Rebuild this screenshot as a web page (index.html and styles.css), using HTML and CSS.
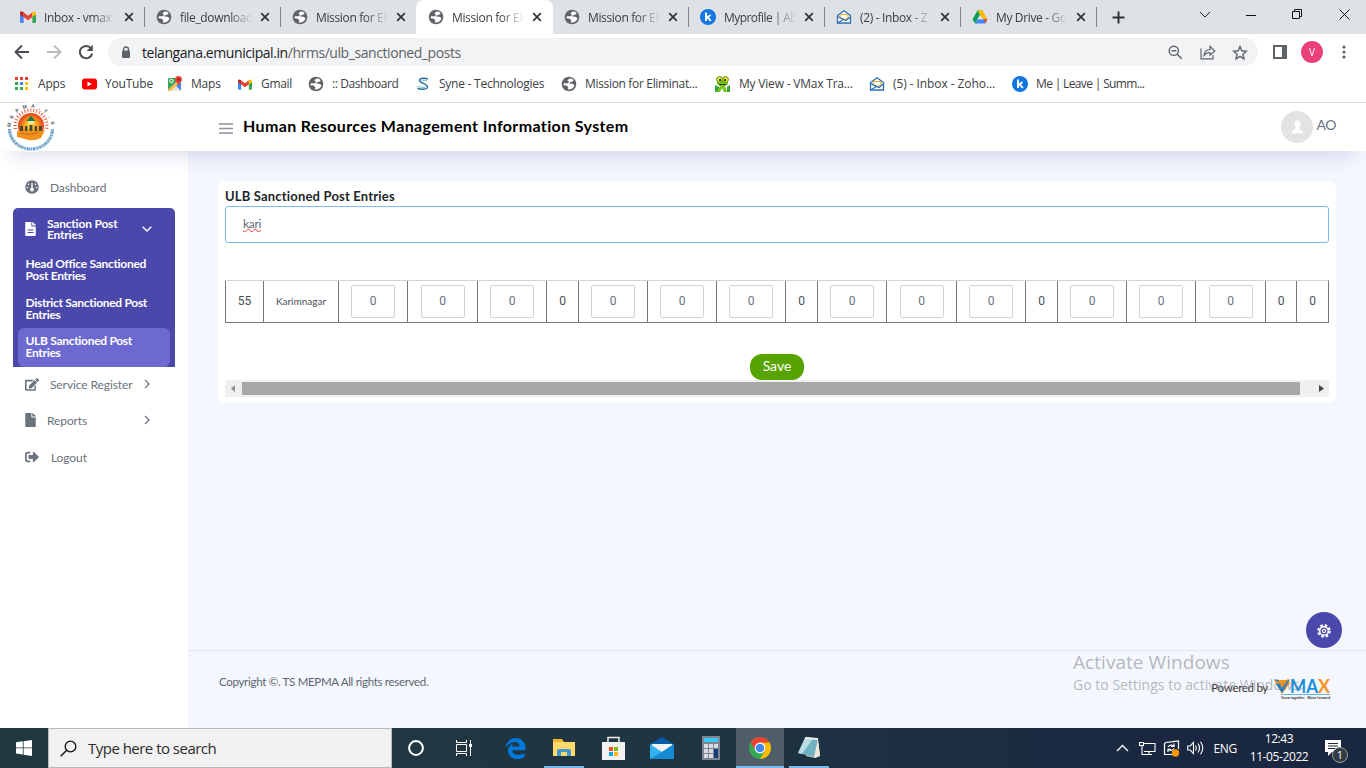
FILE: index.html
```html
<!DOCTYPE html>
<html lang="en">
<head>
<meta charset="utf-8">
<title>ULB Sanctioned Post Entries</title>
<link rel="stylesheet" href="styles.css">
</head>
<body>
<svg class="defs" width="0" height="0">
  <symbol id="globe" viewBox="0 0 16 16"><circle cx="8" cy="8" r="7.3" fill="#5f6368"/><path d="M8.500 2.500L6.200 4.600 8 5.600 7.300 7.200H3L2.300 9.300l3.200.2 1.800 1.700-.6 2.200c3.500.6 6.300-1.700 6.800-4.400l-2.300-1.300-3-.2 1.200-1.500 2.600-.4.600-1.600-2-1.500z" fill="#fff"/></symbol>
  <symbol id="gmail" viewBox="0 0 16 12"><path d="M0 1.800V10.500Q0 12 1.300 12H3.600V4.500z" fill="#4285f4"/><path d="M16 1.800V10.500Q16 12 14.700 12H12.400V4.500z" fill="#34a853"/><path d="M3.600 1.200V6L8 9.200 12.400 6V1.200L8 4.700z" fill="#ea4335"/><path d="M0 2Q.2-.8 3.600 1.200V6L0 3.400z" fill="#c5221f"/><path d="M16 2Q15.800-.8 12.400 1.200V6L16 3.400z" fill="#fbbc04"/></symbol>
  <symbol id="keka" viewBox="0 0 16 16"><circle cx="8" cy="8" r="8" fill="#1277e1"/><path d="M6 3.500V12M10.500 6L6.500 9M7.800 8.300L10.800 12" stroke="#fff" stroke-width="1.900" fill="none"/></symbol>
  <symbol id="zoho" viewBox="0 0 16 16"><path d="M1.500 6.500L8 1.700l6.500 4.800V14h-13z" fill="#fff" stroke="#2a6fb8" stroke-width="1.300"/><path d="M4 9V6.500Q4 5.500 5 5.500h6q1 0 1 1V9L9 10.500z" fill="#fff" stroke="#e8aa2e" stroke-width="1.200"/><path d="M1.500 7.500L10 11.500 14.500 8M1.500 14L7.500 10.500" stroke="#2a6fb8" fill="none" stroke-width="1.200"/></symbol>
  <symbol id="close" viewBox="0 0 10 10"><path d="M1.200 1.200l7.600 7.600M8.800 1.200L1.200 8.800" stroke="#303336" stroke-width="1.700"/></symbol>
  <symbol id="chev" viewBox="0 0 6 10"><path d="M1 1l4 4-4 4" stroke="currentColor" fill="none" stroke-width="1.200"/></symbol>
  <symbol id="file" viewBox="0 0 384 512"><path fill="currentColor" d="M224 136V0H24C10.700 0 0 10.700 0 24v464c0 13.300 10.700 24 24 24h336c13.300 0 24-10.700 24-24V160H248c-13.200 0-24-10.800-24-24zm160-14.100v6.100H256V0h6.100c6.400 0 12.500 2.500 17 7l97.900 98c4.500 4.500 7 10.600 7 16.900z"/></symbol>
</svg>

<div class="browser">
  <div class="tabs">
    <div class="tab"><svg class="fav"><use href="#gmail" y="2" height="12"/></svg><span class="tt">Inbox - vmax.</span><svg class="cx"><use href="#close"/></svg></div>
    <div class="tab"><svg class="fav"><use href="#globe"/></svg><span class="tt">file_download</span><svg class="cx"><use href="#close"/></svg></div>
    <div class="tab"><svg class="fav"><use href="#globe"/></svg><span class="tt">Mission for Eli</span><svg class="cx"><use href="#close"/></svg></div>
    <div class="tab active"><svg class="fav"><use href="#globe"/></svg><span class="tt">Mission for Eli</span><svg class="cx"><use href="#close"/></svg></div>
    <div class="tab"><svg class="fav"><use href="#globe"/></svg><span class="tt">Mission for Eli</span><svg class="cx"><use href="#close"/></svg></div>
    <div class="tab sep"><svg class="fav"><use href="#keka"/></svg><span class="tt tight">Myprofile | Ab</span><svg class="cx"><use href="#close"/></svg></div>
    <div class="tab sep"><svg class="fav"><use href="#zoho"/></svg><span class="tt">(2) - Inbox - Z</span><svg class="cx"><use href="#close"/></svg></div>
    <div class="tab sep"><svg class="fav" viewBox="0 0 16 16"><path d="M5.500 1.500h5L8 6 3 14.500.500 10.200z" fill="#0f9d58"/><path d="M5.500 1.500h5L15.500 10.200h-5z" fill="#fbbc04"/><path d="M5.500 10.200h10L13 14.500H3z" fill="#4285f4"/><path d="M12 10.200h3.500L13 14.500z" fill="#ea4335"/><path d="M8 6l2.500 4.200h-5z" fill="#dee1e6"/></svg><span class="tt">My Drive - Go</span><svg class="cx"><use href="#close"/></svg></div>
    <div class="newtab"><svg width="13" height="13"><path d="M6.500 .500v12M.500 6.500h12" stroke="#303336" stroke-width="2"/></svg></div>
    <div class="wincontrols">
      <svg width="12" height="7"><path d="M1 1l5 5 5-5" stroke="#222" fill="none"/></svg>
      <svg width="10" height="6"><path d="M0 3.500h10" stroke="#111"/></svg>
      <svg width="11" height="11"><path d="M.500 2.500h7v7h-7zM2.500 2.500v-2h7v7h-2" stroke="#111" fill="none"/></svg>
      <svg width="11" height="11"><path d="M.500 .500l10 10M10.500 .500l-10 10" stroke="#111" fill="none"/></svg>
    </div>
  </div>
  <div class="toolbar">
    <svg class="nav" width="16" height="16"><path d="M15 8H2M8 1.500L1.500 8 8 14.500" stroke="#4a4d51" stroke-width="1.900" fill="none"/></svg>
    <svg class="nav" width="16" height="16"><path d="M1 8h13M8 1.500L14.500 8 8 14.500" stroke="#b9bbbe" stroke-width="1.900" fill="none"/></svg>
    <svg class="nav" width="16" height="16"><path d="M13 4.200A6.200 6.200 0 1 0 14.200 9.500" stroke="#4a4d51" stroke-width="2" fill="none"/><path d="M14.800 .800v6.200H8.600z" fill="#4a4d51"/></svg>
    <div class="omni">
      <svg width="10" height="13"><path d="M2.500 5V3.500a2.500 2.500 0 0 1 5 0V5" stroke="#5f6368" stroke-width="1.400" fill="none"/><rect x="1" y="4.500" width="8" height="7.500" rx="1" fill="#5f6368"/></svg>
      <span class="url">telangana.emunicipal.in<i>/hrms/ulb_sanctioned_posts</i></span>
      <svg width="15" height="15"><circle cx="5.800" cy="5.800" r="4.600" stroke="#5f6368" stroke-width="1.400" fill="none"/><path d="M9.200 9.200l4.600 4.600M3.500 5.800h4.600" stroke="#5f6368" stroke-width="1.500"/></svg>
      <svg class="share" width="16" height="15"><path d="M1 3.500v10.300h12V10" stroke="#5f6368" stroke-width="1.200" fill="none"/><path d="M4 10.500C4.500 6.500 6.800 4.600 10 4.500V1.500L14.800 6 10 10.200V7.500C7.500 7.500 5.700 8.300 4 10.500z" stroke="#5f6368" stroke-width="1.200" fill="none"/></svg>
      <svg width="16" height="15"><path d="M8 1.500l1.800 4.300 4.700.4-3.600 3.100 1.100 4.600L8 11.400l-4 2.500 1.100-4.600-3.600-3.100 4.700-.4z" stroke="#5f6368" stroke-width="1.400" fill="none"/></svg>
    </div>
    <svg class="side" width="14" height="14"><path d="M1 1h12v12H1z" fill="none" stroke="#5f6368" stroke-width="2"/><path d="M9 0h5v14H9z" fill="#5f6368"/></svg>
    <div class="profile">V</div>
    <svg width="4" height="14"><g fill="#5f6368"><circle cx="2" cy="2" r="1.600"/><circle cx="2" cy="7" r="1.600"/><circle cx="2" cy="12" r="1.600"/></g></svg>
  </div>
  <div class="bookmarks">
    <div class="bm b1"><svg width="14" height="14"><path d="M0 0h3v3H0zM5 0h3v3H5zM10 0h3v3h-3z" fill="#ea4335"/><path d="M0 5h3v3H0z" fill="#34a853"/><path d="M5 5h3v3H5z" fill="#4285f4"/><path d="M10 5h3v3h-3z" fill="#fbbc04"/><path d="M0 10h3v3H0zM5 10h3v3H5z" fill="#34a853"/><path d="M10 10h3v3h-3z" fill="#fbbc04"/></svg><span>Apps</span></div>
    <div class="bm b2"><svg width="16" height="16"><rect x="1" y="2.500" width="15" height="11" rx="3" fill="#f00"/><path d="M6.500 5.500v5l4.500-2.500z" fill="#fff"/></svg><span>YouTube</span></div>
    <div class="bm b3"><svg width="16" height="16"><rect x="1" y="2" width="13" height="13" rx="1.500" fill="#34a853"/><path d="M1 13L12 3l2 2v8.500L10 15H3z" fill="#4285f4"/><path d="M2 15l6.500-6L14 15z" fill="#e6e6e6"/><path d="M1 13.500L12.500 3l1.500 2L4 15H2z" fill="#f9c440"/><circle cx="4.500" cy="5" r="1.700" fill="none" stroke="#fff"/><path d="M11.500 0a3.500 3.500 0 0 1 3.500 3.500c0 2.500-3 3.500-3.500 6.500-.5-3-3.500-4-3.500-6.500A3.500 3.500 0 0 1 11.500 0z" fill="#e84335"/><circle cx="11.500" cy="3.500" r="1.200" fill="#841c1c"/></svg><span>Maps</span></div>
    <div class="bm b4"><svg width="16" height="16"><use href="#gmail" x="1" y="3" width="14" height="11"/></svg><span>Gmail</span></div>
    <div class="bm b5"><svg width="16" height="16"><use href="#globe"/></svg><span>:: Dashboard</span></div>
    <div class="bm b6"><svg width="16" height="16"><path d="M13 3C9.500 1.500 4.500 2 4.500 4.500S13 8 12.500 11 6 13.500 2.500 12.500" stroke="#2c6f9f" fill="none" stroke-width="1.500"/><path d="M12 5C8 3.500 6 4 6.500 5.200M2.500 10.500c4 1 8 1.200 8-.5" stroke="#58b8c4" fill="none"/></svg><span>Syne - Technologies</span></div>
    <div class="bm b7"><svg width="16" height="16"><use href="#globe"/></svg><span>Mission for Eliminat...</span></div>
    <div class="bm b8"><svg width="17" height="16"><path d="M1 9l4 2v5H1zM16 9l-3 2v5h3z" fill="#39a33c"/><path d="M3 3h11v5l-3 2 2 6h-3l-2-4-2 4H3l3-6-3-2z" fill="#76c51d"/><circle cx="5.500" cy="3.500" r="2.900" fill="#f7e32a" stroke="#4a941a"/><circle cx="11.500" cy="3.500" r="2.900" fill="#f7e32a" stroke="#4a941a"/><path d="M5 3h2v2H5zM10 3h2v2h-2zM5 8h7v1H5z" fill="#263a10"/></svg><span>My View - VMax Tra...</span></div>
    <div class="bm b9"><svg width="16" height="16"><use href="#zoho"/></svg><span>(5) - Inbox - Zoho...</span></div>
    <div class="bm b10"><svg width="16" height="16"><use href="#keka"/></svg><span>Me | Leave | Summ...</span></div>
  </div>
</div>

<header class="apphead">
  <svg class="logo" width="50" height="50" viewBox="0 0 50 50">
    <defs><radialGradient id="sun"><stop offset="0" stop-color="#ffe94e"/><stop offset=".45" stop-color="#ffad1f"/><stop offset="1" stop-color="#e33d16"/></radialGradient><path id="arcTop" d="M4.500 26A20 20 0 0 1 45.500 26"/></defs>
    <circle cx="25" cy="25" r="25" fill="#fff"/>
    <path d="M9.500 27A15.800 15.800 0 1 1 40.500 27" fill="none" stroke="#ed5b37" stroke-width="3.500" stroke-dasharray="1 2"/>
    <circle cx="25" cy="24" r="13" fill="url(#sun)"/>
    <path d="M25 14l4.500 5h-9z" fill="#167a43"/><path d="M22 19h6v3h-6z" fill="#f5e5a0"/><path d="M14 24h3v5h-3zM19 24h2.500v5H19zM23.500 23h3v6h-3zM28.500 24h2.500v5h-2.500zM33 24h3v5h-3z" fill="#4b4b35"/>
    <path d="M11 29h24l4-1-4 8q-8 4-16 1l-8-2z" fill="#f2921d"/><path d="M15 31q10 3 18-1" stroke="#c96913" fill="none"/>
    <text class="arc"><textPath href="#arcTop" startOffset="1" textLength="60">M E P M A , T . S</textPath></text>
    <path d="M3.500 27A21.500 20 0 0 0 46.500 27" fill="none" stroke="#6fa3c9" stroke-width="3.200" stroke-dasharray="1.600 .6 2.300 .4 1 .5"/>
  </svg>
  <svg class="burger" width="14" height="11"><path d="M0 1h14M0 5.500h14M0 10h14" stroke="#8d9198" stroke-width="1.700"/></svg>
  <h1>Human Resources Management Information System</h1>
  <div class="user"><svg width="32" height="32"><circle cx="16" cy="16" r="16" fill="#e3e3e3"/><path d="M16.500 9.500c2.200 0 3.200 1.700 3 4-.2 1.700-1.300 2.700-1.300 3.500 0 2 4 1.800 4.300 5.500h-12c.3-3.700 4.300-3.500 4.300-5.500 0-.8-1.100-1.800-1.300-3.500-.2-2.300.8-4 3-4z" fill="#fff"/></svg><span>AO</span></div>
</header>

<div class="app">
  <nav class="sidebar">
    <a class="item dash"><svg width="14" height="14"><circle cx="7" cy="7" r="6.800" fill="#69727d"/><path d="M7 3v6" stroke="#fff" stroke-width="1.300"/><circle cx="7" cy="9.500" r="1.900" fill="#fff"/><g fill="#fff"><circle cx="3.500" cy="4.300" r=".8"/><circle cx="10.500" cy="4.300" r=".8"/><circle cx="2.300" cy="7.500" r=".8"/><circle cx="11.700" cy="7.500" r=".8"/></g></svg><span class="w1">Dashboard</span></a>
    <div class="group">
      <a class="ghead"><svg width="11" height="14"><use href="#file"/><path d="M2.500 8h6M2.500 10.500h6" stroke="#4c49ad"/></svg><span class="w2">Sanction Post<br>Entries</span><svg class="down" width="10" height="6"><path d="M.700 .700L5 5 9.300 .700" stroke="#fff" fill="none" stroke-width="1.300"/></svg></a>
      <a class="sub s1">Head Office Sanctioned<br>Post Entries</a>
      <a class="sub s2">District Sanctioned Post<br>Entries</a>
      <a class="sub s3">ULB Sanctioned Post<br>Entries</a>
    </div>
    <a class="item reg"><svg width="14" height="13" viewBox="0 0 576 512"><path fill="#69727d" d="M402.600 83.200l90.200 90.200c3.800 3.800 3.800 10 0 13.800L274.400 405.600l-92.800 10.300c-12.400 1.400-22.900-9.100-21.500-21.500l10.300-92.800L388.800 83.200c3.800-3.800 10-3.800 13.800 0zm162-22.900l-48.800-48.800c-15.200-15.200-39.900-15.200-55.200 0l-35.400 35.400c-3.800 3.800-3.800 10 0 13.800l90.200 90.200c3.800 3.800 10 3.800 13.800 0l35.400-35.400c15.200-15.300 15.200-40 0-55.200zM384 346.200V448H64V128h229.800c3.200 0 6.200-1.300 8.500-3.500l40-40c7.600-7.600 2.200-20.500-8.500-20.500H48C21.500 64 0 85.500 0 112v352c0 26.500 21.500 48 48 48h352c26.500 0 48-21.500 48-48V306.200c0-10.700-12.900-16-20.500-8.500l-40 40c-2.200 2.300-3.500 5.300-3.500 8.500z"/></svg><span class="w3">Service Register</span><svg class="right" width="6" height="10"><use href="#chev"/></svg></a>
    <a class="item rep"><svg width="11" height="14"><use href="#file"/></svg><span class="w4">Reports</span><svg class="right" width="6" height="10"><use href="#chev"/></svg></a>
    <a class="item out"><svg width="14" height="14" viewBox="0 0 512 512"><path fill="#69727d" d="M497 273L329 441c-15 15-41 4.500-41-17v-96H152c-13.300 0-24-10.700-24-24v-96c0-13.300 10.700-24 24-24h136V88c0-21.400 25.900-32 41-17l168 168c9.300 9.400 9.300 24.600 0 34zM192 436v-40c0-6.600-5.400-12-12-12H96c-17.700 0-32-14.300-32-32V160c0-17.700 14.300-32 32-32h84c6.600 0 12-5.400 12-12V76c0-6.600-5.400-12-12-12H96c-53 0-96 43-96 96v192c0 53 43 96 96 96h84c6.600 0 12-5.400 12-12z"/></svg><span class="w5">Logout</span></a>
  </nav>
  <main class="main">
    <section class="card">
      <h2>ULB Sanctioned Post Entries</h2>
      <div class="search"><span>kari</span></div>
      <div class="row">
        <div>55</div><div class="name">Karimnagar</div>
        <div><b>0</b></div><div><b>0</b></div><div><b>0</b></div><div>0</div>
        <div><b>0</b></div><div><b>0</b></div><div><b>0</b></div><div>0</div>
        <div><b>0</b></div><div><b>0</b></div><div><b>0</b></div><div>0</div>
        <div><b>0</b></div><div><b>0</b></div><div><b>0</b></div><div>0</div><div>0</div>
      </div>
      <button class="save">Save</button>
      <div class="scroll"><svg width="17" height="17"><path d="M10 5v7L6 8.500z" fill="#8f8f8f"/></svg><div class="thumb"></div><svg width="17" height="17"><path d="M7 5v7l5-3.500z" fill="#444"/></svg></div>
    </section>
    <footer>
      <span class="copy">Copyright ©. TS MEPMA All rights reserved.</span>
      <span class="powered">Powered by</span>
      <svg class="vmax" width="58" height="22" viewBox="0 0 58 22"><path d="M1 2h13l1-2 2 5-8 11z" fill="#f7941d"/><path d="M3 6l6 9 8-14-3 2-5 7-2-4zM1 1l5 1-1 2z" fill="#1c7fce"/><text x="17" y="14.500" class="vt" textLength="28" lengthAdjust="spacingAndGlyphs">MA</text><text x="45" y="14.500" class="vt o" textLength="12" lengthAdjust="spacingAndGlyphs">X</text><path d="M8 16.500h49" stroke="#3da2df" stroke-width=".8"/><text x="8" y="20.500" class="tag" textLength="49" lengthAdjust="spacingAndGlyphs">Grow together . Move forward</text></svg>
    </footer>
    <div class="fab"><svg width="14" height="14" viewBox="0 0 14 14"><circle cx="7" cy="7" r="5.700" fill="none" stroke="#fff" stroke-width="2.200" stroke-dasharray="2.500 1.980"/><circle cx="7" cy="7" r="4.300" fill="none" stroke="#fff" stroke-width="1.500"/><circle cx="7" cy="7" r="1.600" fill="none" stroke="#fff" stroke-width="1.100"/></svg></div>
    <div class="activate"><p>Activate Windows</p><span>Go to Settings to activate Windows.</span></div>
  </main>
</div>

<div class="taskbar">
  <div class="start"><svg width="16" height="16"><path d="M0 2.300l6.800-1v6.200H0zM7.600 1.200L16 0v7.500H7.600zM0 8.300h6.800v6.200l-6.800-1zM7.600 8.300H16V16l-8.400-1.200z" fill="#fff"/></svg></div>
  <div class="tsearch"><svg width="17" height="17"><circle cx="10.500" cy="6.500" r="5.300" stroke="#111" stroke-width="1.300" fill="none"/><path d="M6.700 10.300L.700 16.300" stroke="#111" stroke-width="1.400"/></svg><span>Type here to search</span></div>
  <div class="ti"><svg width="16" height="16"><circle cx="8" cy="8" r="6.900" fill="none" stroke="#fff" stroke-width="2"/></svg></div>
  <div class="ti view"><svg width="16" height="16"><path d="M.500 0v2.500h10V0M.500 16v-2.500h10V16M.500 4.500h10v7H.500zM14.500 0v16" stroke="#fff" fill="none"/><path d="M13 4h3v3h-3z" fill="#fff"/></svg></div>
  <div class="ti edge"><svg width="21" height="21"><path d="M.500 9.500C1.500 3.500 5.500 0 10.500 0c6.500 0 10 5 10 9.500v2.800H7.200c.3 5.200 8 5.500 12.300 2.700v4.300C11.500 23.500 3 20 3 13c0-3.500 2-6 5-7.500C7.200 6.500 7 7.500 7 8.500h7.500C14.500 2 6 2.500.500 9.500z" fill="#0078d7"/></svg></div>
  <div class="ti open"><svg width="22" height="18"><path d="M0 0h9l2 3h11v14H0z" fill="#f4b52c"/><path d="M0 3h22v14H0z" fill="#ffd867"/><path d="M4 17v-5q0-2 2-2h10q2 0 2 2v5h-4v-4H8v4z" fill="#3f97d4"/></svg></div>
  <div class="ti"><svg width="23" height="24"><path d="M6 9V1.500h11V9" stroke="#eee" stroke-width="1.500" fill="none"/><path d="M0 6h23v18H0z" fill="#f2f2f2"/><path d="M7 11h4v4H7z" fill="#f25022"/><path d="M12 11h4v4h-4z" fill="#7fba00"/><path d="M7 16h4v4H7z" fill="#00a4ef"/><path d="M12 16h4v4h-4z" fill="#ffb900"/></svg></div>
  <div class="ti"><svg width="24" height="22"><path d="M0 7l12-7 12 7v15H0z" fill="#0a5ba8"/><path d="M2 7h20v8H2z" fill="#f2f2f2"/><path d="M0 7l12 8L24 7v15H0z" fill="#35b3f1"/><path d="M0 22L15 13 24 7v15z" fill="#168ad4"/></svg></div>
  <div class="ti"><svg width="18" height="24"><path d="M0 0h18v24H0z" fill="#7e8791"/><path d="M2 2h14v4H2z" fill="#3cc8f4"/><path d="M2 8h4v4H2zM7 8h4v4H7zM12 8h4v4h-4zM2 13h4v4H2zM7 13h4v4H7zM2 18h4v4H2zM7 18h4v4H7z" fill="#d9dde1"/><path d="M12 13h4v9h-4z" fill="#123f7c"/></svg></div>
  <div class="ti cur"><svg width="22" height="22" viewBox="0 0 22 22"><circle cx="11" cy="11" r="11" fill="#34a853"/><path d="M11 11L1.500 5.500A11 11 0 0 1 20.500 5.500z" fill="#ea4335"/><path d="M11 5.500h9.500A11 11 0 0 1 11 22l4.800-8.200z" fill="#fbbc04"/><path d="M1.500 5.500l5 8.500 4.500-3V5.500z" fill="#ea4335"/><path d="M1.500 5.500l5 8.500 2 2L1 11z" fill="#34a853"/><circle cx="11" cy="11" r="5.400" fill="#fff"/><circle cx="11" cy="11" r="4.300" fill="#4285f4"/></svg></div>
  <div class="ti open note"><svg width="23" height="22"><path d="M8 0l12 2 2 17-5 2-9-2z" fill="#d9d6c2"/><path d="M7 1l13 1-4 18-16-4z" fill="#6fb3c0"/><path d="M7 1l8 .6L4 17l-4-1z" fill="#b5dde2"/><path d="M7 1l13 1" stroke="#eee" stroke-width="2"/><path d="M20 3l2 16-6 2z" fill="#eeeadb"/></svg></div>
  <div class="tray">
    <svg width="13" height="8"><path d="M1 7l5.500-5.500L12 7" stroke="#fff" fill="none" stroke-width="1.300"/></svg>
    <svg width="17" height="15"><path d="M5 2.500h11v8H5M3 5v9M3 13.500h10M10 10.500v3M.500 1.500h4v3h-4z" stroke="#fff" fill="none" stroke-width="1.100"/></svg>
    <svg width="17" height="17"><path d="M9 14.500H1.500v-11L3 2.500l12.500-1.500v8" stroke="#fff" fill="none" stroke-width="1.200"/><path d="M5 7q2-3 5.500-1M11 3.500v3H8M11 8.500q-2 3-5.500 1M5 12V9.300h3" stroke="#fff" fill="none" stroke-width="1.200"/><circle cx="12.500" cy="13" r="3.700" fill="#ff9800"/></svg>
    <svg width="17" height="14"><path d="M.700 5h2.500L6.500 1.500v11L3.200 9H.700zM8.500 4.500q1.500 2.500 0 5M11 2.500q3 4.500 0 9M13.500 .700q4.500 6.300 0 12.600" stroke="#fff" fill="none" stroke-width="1.100"/></svg>
    <span class="eng">ENG</span>
    <div class="clock"><span class="tm">12:43</span><span class="dt">11-05-2022</span></div>
    <div class="notif"><svg width="16" height="16"><path d="M0 0h16v12H7l-4 4v-4H0z" fill="#fff"/><path d="M3 3.500h10M3 6h10M3 8.500h7" stroke="#1b2a3e"/></svg><em>1</em></div>
  </div>
</div>
</body>
</html>
```
FILE: styles.css
```css
* { box-sizing: border-box; }
body { margin: 0; width: 1366px; height: 768px; overflow: hidden; display: flex; flex-direction: column; font-family: "Open Sans", "Noto Sans", sans-serif; font-size: 12px; background: #fff; }
svg { display: block; flex: none; }
.defs { position: absolute; }

.browser { height: 103px; flex: none; border-bottom: 1px solid #d9dadc; background: #fff; color: #3c4043; }
.tabs { height: 34px; background: #dee1e6; display: flex; padding-left: 8px; }
.tab { width: 136px; flex: none; display: flex; align-items: center; padding: 0 10px 0 12px; }
.tab:nth-child(2), .tab:nth-child(3), .tab.sep, .newtab { background: linear-gradient(#83868b, #83868b) 0 7px / 1px 20px no-repeat; }
.tab.active { background: #fff; width: 137px; margin-right: -1px; border-radius: 8px 8px 0 0; }
.fav { width: 16px; height: 16px; }
.fav use { width: 16px; }
.tt { width: 72px; margin-left: 8px; white-space: nowrap; overflow: hidden; letter-spacing: -.35px; -webkit-mask-image: linear-gradient(90deg, #000 68%, transparent 100%); mask-image: linear-gradient(90deg, #000 68%, transparent 100%); }
.tt.tight { letter-spacing: -.55px; }
.cx { width: 10px; height: 10px; margin-left: 8px; }
.newtab { width: 45px; flex: none; display: flex; align-items: center; padding-left: 16px; }
.wincontrols { flex: 1; display: flex; align-items: center; gap: 36px; padding: 0 0 5px 58px; }
.wincontrols svg:first-child { margin-right: -1px; }

.toolbar { height: 36px; display: flex; align-items: center; padding: 2px 19px 2px 14px; }
.nav { margin-right: 16px; }
.omni { width: 1150px; height: 28px; border-radius: 14px; background: #f1f3f4; display: flex; align-items: center; padding: 0 10px 0 13px; margin-left: -2px; }
.url { flex: 1; margin: 0 0 0 11px; font-size: 14px; letter-spacing: -.43px; color: #202124; white-space: nowrap; }
.url i { font-style: normal; color: #5f6368; }
.share { margin: 0 16px 0 17px; }
.side { margin-left: 15px; }
.profile { width: 22px; height: 22px; border-radius: 50%; background: #ec407a; color: #fff; font-size: 10px; line-height: 22px; text-align: center; margin: 0 19px 0 14px; }

.bookmarks { height: 32px; display: flex; align-items: center; padding: 0 0 4px 15px; }
.bm { display: flex; align-items: center; white-space: nowrap; flex: none; }
.bm span { margin: -1px 0 0 9px; letter-spacing: -.2px; }
.b1 { width: 66px; } .b2 { width: 86px; } .b3 { width: 70px; } .b4 { width: 71px; } .b5 { width: 107px; }
.b6 { width: 146px; } .b7 { width: 153px; } .b8 { width: 155px; } .b9 { width: 143px; }
.bm.b2 span, .bm.b3 span, .bm.b5 span, .bm.b7 span, .bm.b8 span, .bm.b9 span, .bm.b10 span { margin-left: 8px; }
.bm.b4 span { margin-left: 8px; letter-spacing: -.3px; }
.bm.b5 span { letter-spacing: -.4px; }
.bm.b6 span { letter-spacing: -.25px; }
.bm.b6 span { margin-left: 8px; }
.bm.b7 span { letter-spacing: -.33px; }
.bm.b9 span { letter-spacing: -.08px; }
.bm.b10 span { letter-spacing: -.65px; }

.apphead { height: 48px; flex: none; display: flex; align-items: center; background: #fff; position: relative; z-index: 2; font-family: Lato, sans-serif; padding-right: 30px; box-shadow: 0 15px 22px -12px rgba(60, 55, 140, .2); }
.logo { margin: 0 164px 0 6px; width: 50px; height: 50px; }
.arc { font: bold 5px "Liberation Sans", sans-serif; fill: #555; }
.burger { margin: 2px 0 0 -1px; }
.apphead h1 { margin: -3px 0 0 10px; font-size: 16px; font-weight: 700; color: #000; letter-spacing: .37px; white-space: nowrap; }
.user { margin-left: auto; display: flex; align-items: center; color: #69727d; font-size: 14px; letter-spacing: -.5px; }
.user span { margin: -5px 0 0 4px; }

.app { flex: 1; display: flex; min-height: 0; font-family: Lato, sans-serif; }
.sidebar { width: 188px; padding-top: 27px; color: #69727d; background: #fff; font-size: 12px; }
.item { display: flex; align-items: center; padding-left: 25px; height: 18px; white-space: nowrap; }
.item span { margin-left: 11px; letter-spacing: -.1px; }
.group { width: 162px; height: 159px; margin: 12px 0 8px 13px; padding: 10px 5px 0; background: #4b48ab; border-radius: 5px 5px 0 0; color: #fff; font-weight: 700; line-height: 11.500px; font-size: 12px; letter-spacing: -.3px; }
.ghead { display: flex; height: 22px; padding: 0 0 0 7px; align-items: center; }
.ghead span { width: 92px; margin-left: 11px; white-space: nowrap; letter-spacing: -.2px; }
.down { margin-left: 3px; }
.sub { display: block; padding-left: 7.500px; white-space: nowrap; }
.s1 { margin-top: 18px; } .s2 { margin-top: 16px; }
.s3 { height: 39px; margin-top: 8px; padding-top: 7px; background: #6c69d0; border-radius: 6px; }
.item.rep { margin-top: 18px; } .item.out { margin-top: 19px; }
.item.rep span { width: 87px; }
.item.out span { margin-left: 12px; }
.right { margin-left: 10px; }
.w3 { width: 84px; }

.main { flex: 1; background: #f4f7fe; position: relative; display: flex; flex-direction: column; padding-top: 30px; }
.card { width: 1118px; height: 222px; margin-left: 30px; background: #fff; border-radius: 8px; padding: 7px 7px 0; display: flex; flex-direction: column; }
.card h2 { margin: 0; height: 18px; line-height: 17px; font-size: 13px; font-weight: 700; color: #212529; letter-spacing: .18px; }
.search { height: 37px; border: 1px solid #7db9f7; border-radius: 3px; padding: 8px 17px; color: #616a73; line-height: 17px; letter-spacing: -.3px; }
.search span { text-decoration: underline wavy #e33 1px; text-underline-offset: 0; text-decoration-skip-ink: none; }
.row { margin-top: 37px; height: 43px; display: grid; grid-template-columns: 38px 75px 69px 70px 69px 32px 69px 69px 69px 32px 69px 70px 69px 32px 69px 69px 70px 31px 33px; border-top: 1px solid #ced4da; border-bottom: 1px solid #777; border-right: 1px solid #777; color: #4a4f55; font-family: Roboto, sans-serif; font-size: 12px; }
.row div { border-left: 1px solid #777; display: flex; align-items: center; justify-content: center; padding-bottom: 1px; }
.row div:last-child { padding-right: 1px; }
.row .name { font: 10px Lato, sans-serif; padding-bottom: 2px; }
.row b { width: 44px; height: 33px; margin-bottom: -1px; border: 1px solid #ced4da; border-radius: 2px; font-weight: 400; text-align: center; line-height: 31px; color: #69727c; }
.save { align-self: center; margin-top: 31px; width: 54px; height: 26px; flex: none; border: 0; border-radius: 12px; background: #57a300; color: #fff; font: 14px Lato, sans-serif; padding: 0 0 3px; }
.scroll { height: 17px; flex: none; background: #f0f0f0; display: flex; }
.thumb { width: 1058px; height: 13px; margin: 2px 12px 0 0; background: #a8a8a8; }
footer { margin-top: 247px; border-top: 1px solid #e3e6f0; height: 78px; display: flex; align-items: flex-start; padding: 23px 35px 0 31px; color: #5d6570; line-height: 16px; white-space: nowrap; font-size: 11.500px; letter-spacing: -.3px; }
.powered { margin: 6px 0 0 auto; color: #333; }
.vmax { margin: 4px 0 0 5px; letter-spacing: 0; }
.vt { font: bold 19px Lato, sans-serif; fill: #178fdc; } .vt.o { fill: #f7941d; }
.tag { font: bold 4px "Liberation Sans", sans-serif; fill: #333; }
.fab { position: absolute; left: 1118px; top: 461px; width: 36px; height: 36px; border-radius: 50%; background: #4b48ab; display: flex; align-items: center; justify-content: center; padding-top: 2px; }
.activate { position: absolute; left: 885px; top: 499px; color: rgba(125, 127, 132, .55); font-family: "Open Sans", sans-serif; white-space: nowrap; }
.activate p { margin: 0; font-size: 19px; line-height: 25px; letter-spacing: .05px; }
.activate span { display: block; font-size: 14px; line-height: 20px; letter-spacing: .02px; }

.taskbar { height: 40px; flex: none; display: flex; background: linear-gradient(90deg, #21383f, #1f3542 50%, #1a2740 85%, #1a2740); color: #fff; }
.start { width: 48px; display: flex; align-items: center; justify-content: center; }
.tsearch { width: 344px; border: 1px solid #b9b9b9; background: #f1f1f1; display: flex; align-items: center; padding-left: 11px; color: #2b2b2b; font-size: 15px; }
.tsearch span { margin-left: 11px; letter-spacing: -.52px; }
.ti { width: 48px; margin-right: 1px; display: flex; align-items: center; justify-content: center; }
.ti.view { padding-right: 2px; }
.ti.edge { padding-left: 2px; }
.ti.open { box-shadow: inset 0 -2px #76b9ed; width: 40px; margin: 0 5px 0 5px; }
.ti.cur { background: #4f5e68; box-shadow: inset 0 -2px #76b9ed; }
.ti.open.note { margin-left: 4px; }
.tray { margin-left: auto; display: flex; align-items: center; }
.tray > svg { margin-right: 7px; }
.tray > svg:first-child { margin-right: 10px; }
.eng { margin-left: 2px; font-size: 12px; letter-spacing: -.3px; }
.clock { width: 82px; margin-left: 1px; text-align: center; font-size: 12px; line-height: 18px; display: flex; flex-direction: column; letter-spacing: -.4px; }
.notif { width: 47px; position: relative; padding-left: 6px; margin-left: -1px; }
.notif em { position: absolute; left: 13px; top: 7px; width: 16px; height: 16px; border-radius: 50%; border: 1px solid #999; background: #333b45; font-style: normal; font-size: 11px; line-height: 14px; text-align: center; }
```
